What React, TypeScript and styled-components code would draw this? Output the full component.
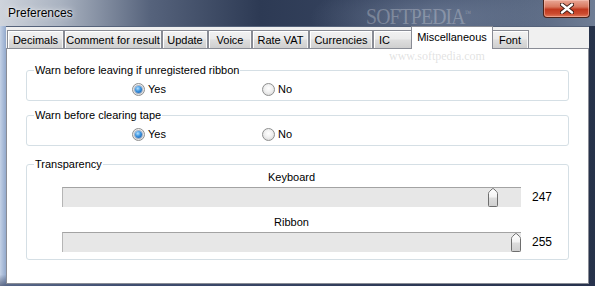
import React from 'react';
import styled, { createGlobalStyle } from 'styled-components';

const GlobalStyle = createGlobalStyle`
  html, body {
    margin: 0;
    padding: 0;
    background: #2a3850;
  }
  * {
    box-sizing: border-box;
  }
`;

const Window = styled.div`
  position: relative;
  width: 595px;
  height: 286px;
  overflow: hidden;
  display: flex;
  flex-direction: column;
  font-family: "Liberation Sans", Arial, sans-serif;
  font-size: 11px;
  color: #000;
  background:
    linear-gradient(180deg, rgba(0, 0, 0, 0) 96%, rgba(40, 50, 80, 0.6) 100%),
    linear-gradient(90deg, #c3d1e6 0px, #93a9cc 6px, #5d719a 120px, #34425e 400px, #26324a 100%);
`;

const TitleBar = styled.div`
  height: 26px;
  display: flex;
  align-items: flex-start;
  justify-content: space-between;
  background:
    radial-gradient(ellipse 120px 40px at 430px 18px, rgba(150, 165, 190, 0.45), rgba(0, 0, 0, 0)),
    linear-gradient(90deg, #cfd4dc 0px, #aab3c1 60px, #56637c 150px, #2d3a54 260px, #3a4864 420px, #56657f 520px, #6f7d95 595px);
`;

const Title = styled.span`
  margin: 6px 0 0 8px;
  font-family: "Liberation Sans", Arial, sans-serif;
  font-size: 12px;
  line-height: 14px;
  color: #000;
  text-shadow: 0 0 6px rgba(255, 255, 255, 0.9), 0 0 2px rgba(255, 255, 255, 0.8);
`;

const CloseButton = styled.div`
  width: 47px;
  height: 18px;
  margin-right: 5px;
  display: flex;
  align-items: center;
  justify-content: center;
  border: 1px solid #4a2219;
  border-top: none;
  border-radius: 0 0 4px 4px;
  background: linear-gradient(180deg, #e9a897 0%, #d9785f 40%, #c1391f 55%, #cb4a2e 80%, #e07a5c 100%);
  box-shadow: inset 0 0 0 1px rgba(255, 210, 200, 0.45);
`;

const Client = styled.div`
  flex: none;
  height: 258px;
  margin: 0 6px;
  display: flex;
  flex-direction: column;
  background: #f0f0f0;
  border-top: 1px solid #55627a;
`;

const TabStrip = styled.div`
  height: 21px;
  display: flex;
  align-items: flex-end;
  padding-left: 1px;
  position: relative;
  z-index: 1;
`;

const Tab = styled.div<{ $w: number; $active?: boolean; $left?: boolean }>`
  width: ${(p) => p.$w}px;
  height: ${(p) => (p.$active ? 23 : 18)}px;
  margin: ${(p) => (p.$active ? '0 -2px -1px -2px' : '0')};
  padding: ${(p) => (p.$active ? '0 2px 3px' : '1px 0 0')};
  padding-left: ${(p) => (p.$left ? '5px' : undefined)};
  display: flex;
  align-items: center;
  justify-content: ${(p) => (p.$left ? 'flex-start' : 'center')};
  white-space: nowrap;
  border: 1px solid #898c95;
  border-bottom: none;
  background: ${(p) =>
    p.$active ? '#ffffff' : 'linear-gradient(180deg, #f2f2f2 0%, #ebebeb 45%, #dddddd 55%, #cfcfcf 100%)'};
  box-shadow: ${(p) => (p.$active ? 'none' : 'inset 1px 1px 0 #ffffff, inset -1px 0 0 #f6f6f6')};
  position: relative;
  z-index: ${(p) => (p.$active ? 2 : 1)};
`;

const Panel = styled.div`
  flex: 1;
  display: flex;
  flex-direction: column;
  gap: 8px;
  padding: 15px 19px 0;
  background: #ffffff;
  border: 1px solid #898c95;
`;

const Group = styled.fieldset<{ $mt?: number }>`
  margin: ${(p) => p.$mt ?? 0}px 0 0;
  padding: ${(p) => (p.$mt ? '0 0 7px 7px' : '6px 0 4px 7px')};
  min-width: 0;
  border: 1px solid #d5dfe5;
  border-radius: 3px;
`;

const Legend = styled.legend`
  padding: 0 1px;
  line-height: 13px;
  font-size: 11px;
`;

const RadioRow = styled.div`
  display: grid;
  grid-template-columns: 130px 130px;
  padding-left: 98px;
  height: 13px;
`;

const RadioLabel = styled.label`
  display: flex;
  align-items: center;
  gap: 3px;
  line-height: 13px;
`;

const RadioDot = styled.span<{ $checked?: boolean }>`
  width: 13px;
  height: 13px;
  border-radius: 50%;
  border: 1px solid #8e8f8f;
  background: radial-gradient(circle at 50% 40%, #ffffff 0%, #f0f0f0 45%, #d2d2d2 100%);
  display: flex;
  align-items: center;
  justify-content: center;

  &::after {
    content: '';
    display: ${(p) => (p.$checked ? 'block' : 'none')};
    width: 7px;
    height: 7px;
    border-radius: 50%;
    background: radial-gradient(circle at 40% 35%, #b6e2ff 0%, #3b94e0 45%, #0e4d9b 100%);
    box-shadow: 0 0 0 1px rgba(20, 60, 120, 0.35);
  }
`;

const SliderBlock = styled.div<{ $mt?: number }>`
  margin-top: ${(p) => p.$mt ?? 0}px;
  padding-left: 28px;
`;

const SliderLabel = styled.div`
  width: 459px;
  text-align: center;
  line-height: 13px;
`;

const SliderRow = styled.div`
  margin-top: 3px;
  display: flex;
  align-items: center;
`;

const Track = styled.div`
  position: relative;
  width: 459px;
  height: 20px;
  background: #e7e7e7;
  border-top: 1px solid #a3a3a3;
  border-left: 1px solid #b5b5b5;
`;

const ThumbWrap = styled.div`
  position: absolute;
  top: 0;
  width: 10px;
  height: 19px;
`;

const Value = styled.span`
  margin-left: 11px;
  font-size: 12px;
  line-height: 14px;
`;

const WatermarkLogo = styled.div`
  position: absolute;
  left: 366px;
  top: 2px;
  pointer-events: none;
  font-family: "Liberation Serif", "Times New Roman", serif;
  font-size: 24px;
  line-height: 24px;
  letter-spacing: -1px;
  color: rgba(255, 255, 255, 0.26);
  transform: scaleX(0.82);
  transform-origin: left top;
`;

const Tm = styled.sup`
  font-size: 8px;
  letter-spacing: 0;
  vertical-align: 8px;
`;

const WatermarkUrl = styled.div`
  position: absolute;
  left: 389px;
  top: 50px;
  pointer-events: none;
  font-family: "Liberation Serif", "Times New Roman", serif;
  font-size: 12px;
  line-height: 13px;
  color: rgba(170, 170, 170, 0.35);
`;

function CloseGlyph() {
  return (
    <svg width="14" height="11" viewBox="0 0 14 11">
      <path d="M2 1.5 L12 9.5 M12 1.5 L2 9.5" stroke="#3a1a14" strokeWidth="4.2" strokeLinecap="round" />
      <path d="M2 1.5 L12 9.5 M12 1.5 L2 9.5" stroke="#ffffff" strokeWidth="2.4" strokeLinecap="round" />
    </svg>
  );
}

function Thumb() {
  return (
    <svg width="10" height="19" viewBox="0 0 10 19">
      <defs>
        <linearGradient id="thumbFill" x1="0" y1="0" x2="0" y2="1">
          <stop offset="0" stopColor="#ffffff" />
          <stop offset="0.45" stopColor="#f3f3f3" />
          <stop offset="0.55" stopColor="#dcdcdc" />
          <stop offset="1" stopColor="#cfcfcf" />
        </linearGradient>
      </defs>
      <path
        d="M0.5 5.5 Q0.5 4.5 1.5 3.5 L4.2 0.9 Q5 0.2 5.8 0.9 L8.5 3.5 Q9.5 4.5 9.5 5.5 V17.5 Q9.5 18.5 8.5 18.5 H1.5 Q0.5 18.5 0.5 17.5 Z"
        fill="url(#thumbFill)"
        stroke="#6e6e6e"
      />
    </svg>
  );
}

const MIN = 100;
const MAX = 255;
const TRACK_W = 459;
const THUMB_W = 10;

function Slider({ label, value, mt }: { label: string; value: number; mt?: number }) {
  const left = Math.round(((value - MIN) / (MAX - MIN)) * (TRACK_W - THUMB_W)) - 1;
  return (
    <SliderBlock $mt={mt}>
      <SliderLabel>{label}</SliderLabel>
      <SliderRow>
        <Track>
          <ThumbWrap style={{ left }}>
            <Thumb />
          </ThumbWrap>
        </Track>
        <Value>{value}</Value>
      </SliderRow>
    </SliderBlock>
  );
}

function YesNo() {
  return (
    <RadioRow>
      <RadioLabel>
        <RadioDot $checked />
        Yes
      </RadioLabel>
      <RadioLabel>
        <RadioDot />
        No
      </RadioLabel>
    </RadioRow>
  );
}

const tabs = [
  { name: 'Decimals', w: 57 },
  { name: 'Comment for result', w: 98 },
  { name: 'Update', w: 46 },
  { name: 'Voice', w: 44 },
  { name: 'Rate VAT', w: 57 },
  { name: 'Currencies', w: 64 },
  { name: 'IC', w: 40, left: true },
  { name: 'Miscellaneous', w: 82, active: true },
  { name: 'Font', w: 38 },
];

export default function App() {
  return (
    <>
      <GlobalStyle />
      <Window>
        <TitleBar>
          <Title>Preferences</Title>
          <CloseButton>
            <CloseGlyph />
          </CloseButton>
        </TitleBar>
        <Client>
          <TabStrip>
            {tabs.map((t) => (
              <Tab key={t.name} $w={t.w} $active={t.active} $left={t.left}>
                {t.name}
              </Tab>
            ))}
          </TabStrip>
          <Panel>
            <Group>
              <Legend>Warn before leaving if unregistered ribbon</Legend>
              <YesNo />
            </Group>
            <Group>
              <Legend>Warn before clearing tape</Legend>
              <YesNo />
            </Group>
            <Group $mt={4}>
              <Legend>Transparency</Legend>
              <Slider label="Keyboard" value={247} />
              <Slider label="Ribbon" value={255} mt={9} />
            </Group>
          </Panel>
        </Client>
        <WatermarkLogo>
          SOFTPEDIA<Tm>™</Tm>
        </WatermarkLogo>
        <WatermarkUrl>www.softpedia.com</WatermarkUrl>
      </Window>
    </>
  );
}
